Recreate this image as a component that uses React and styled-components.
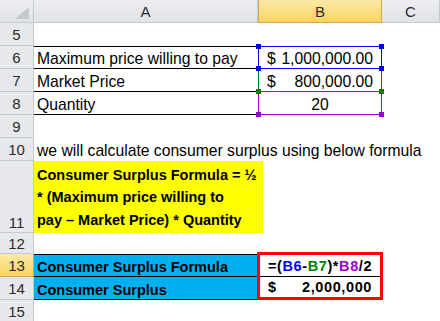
import React from 'react';
import styled, { createGlobalStyle, css } from 'styled-components';

const GlobalStyle = createGlobalStyle`
  html, body { margin: 0; padding: 0; background: #fff; }
  body { font-family: "Liberation Sans", Arial, sans-serif; overflow: hidden; }
`;

const Sheet = styled.div`
  display: grid;
  grid-template-columns: 34px 224px 124px 58px;
  grid-template-rows: 23px repeat(6, 23px) 72px 21px 23px 23px 23px;
  width: 440px;
  height: 321px;
  overflow: hidden;
  background: #fff;
`;

const headerBase = css`
  box-sizing: border-box;
  border-right: 1px solid #c5cad0;
  border-bottom: 1px solid #c5cad0;
  color: #2b2b2b;
  display: flex;
  align-items: center;
  justify-content: center;
  font-size: 15px;
`;

const activeBg = 'linear-gradient(#fde9a7, #f8d360)';
const idleBg = 'linear-gradient(#eceef1, #e0e3e7)';

const Corner = styled.div`
  ${headerBase};
  background: ${idleBg};
  position: relative;
  &::after {
    content: '';
    position: absolute;
    right: 4px;
    bottom: 3px;
    width: 0;
    height: 0;
    border-left: 14px solid transparent;
    border-bottom: 12px solid #c4c7cc;
  }
`;

const ColHeader = styled.div`
  ${headerBase};
  background: ${(p) => (p.$active ? activeBg : idleBg)};
  ${(p) => p.$active && css`border-color: #d9a74a; border-left: 1px solid #d9a74a;`}
`;

const RowHeader = styled.div`
  ${headerBase};
  background: ${(p) => (p.$active ? activeBg : '#e6e8eb')};
  ${(p) => p.$active && css`border-color: #d9a74a;`}
  align-items: ${(p) => (p.$bottom ? 'flex-end' : 'center')};
  padding-bottom: ${(p) => (p.$bottom ? '1px' : '0')};
`;

const lineShadows = (lines = '') => {
  const s = [];
  if (lines.includes('t')) s.push('inset 0 1px 0 #000');
  if (lines.includes('b')) s.push('inset 0 -1px 0 #000');
  return s.length ? s.join(', ') : 'none';
};

const Cell = styled.div`
  box-sizing: border-box;
  min-width: 0;
  display: flex;
  align-items: flex-end;
  justify-content: ${(p) =>
    p.$align === 'center' ? 'center' : p.$align === 'right' ? 'flex-end' : 'flex-start'};
  padding: 0 3px;
  font-size: ${(p) => (p.$bold ? '14.5px' : '15.7px')};
  font-weight: ${(p) => (p.$bold ? 700 : 400)};
  line-height: 20px;
  color: #000;
  white-space: nowrap;
  background: ${(p) => p.$fill || 'transparent'};
  box-shadow: ${(p) => lineShadows(p.$lines)};
`;

const NoteCell = styled.div`
  box-sizing: border-box;
  margin-right: -5px;
  background: #ffff00;
  display: flex;
  flex-direction: column;
  justify-content: flex-end;
  padding: 0 3px 2px;
  font-size: 14.5px;
  font-weight: 700;
  line-height: 22.5px;
  color: #000;
  white-space: nowrap;
`;

const NoteLine = styled.span`
  display: block;
`;

const RefCell = styled.div`
  position: relative;
  box-sizing: border-box;
  display: flex;
  align-items: flex-end;
  justify-content: ${(p) => (p.$center ? 'center' : 'space-between')};
  padding: 0 9px;
  font-size: 15.7px;
  line-height: 20px;
  color: #000;
  white-space: nowrap;
  box-shadow: ${(p) =>
    [
      `inset 1px 0 0 ${p.$color}`,
      `inset -1px 0 0 ${p.$color}`,
      `inset 0 -1px 0 ${p.$color}`,
      p.$top ? `inset 0 1px 0 ${p.$color}` : null,
    ]
      .filter(Boolean)
      .join(', ')};
`;

const Handle = styled.span`
  position: absolute;
  width: 5px;
  height: 5px;
  background: ${(p) => p.$color};
  z-index: ${(p) => p.$z};
  ${(p) => (p.$v === 'top' ? 'top: -2px;' : 'bottom: -2px;')}
  ${(p) => (p.$h === 'left' ? 'left: -2px;' : 'right: -2px;')}
`;

const Handles = ({ color, z, top }) => (
  <>
    {top && <Handle $color={color} $z={z} $v="top" $h="left" />}
    {top && <Handle $color={color} $z={z} $v="top" $h="right" />}
    <Handle $color={color} $z={z} $v="bottom" $h="left" />
    <Handle $color={color} $z={z} $v="bottom" $h="right" />
  </>
);

const ResultBox = styled.div`
  grid-column: 3;
  grid-row: 10 / span 2;
  margin: -2px -1px 0 -1px;
  border: 3px solid #ff0000;
  display: flex;
  flex-direction: column;
  position: relative;
  z-index: 2;
  background: #fff;
`;

const ResultRow = styled.div`
  flex: 1;
  display: flex;
  align-items: flex-end;
  justify-content: ${(p) => (p.$split ? 'space-between' : 'flex-start')};
  padding: 0 8px 0 8px;
  font-size: 14.5px;
  font-weight: 700;
  letter-spacing: 0.6px;
  line-height: 20px;
  white-space: nowrap;
  color: #000;
  border-bottom: ${(p) => (p.$line ? '1px solid #000' : 'none')};
`;

const Ref = styled.span`
  color: ${(p) => p.$color};
`;

const BLUE = '#0000ff';
const GREEN = '#008000';
const PURPLE = '#9900cc';
const CYAN = '#00b0f0';

export default function App() {
  return (
    <>
      <GlobalStyle />
      <Sheet>
        <Corner />
        <ColHeader>A</ColHeader>
        <ColHeader $active>B</ColHeader>
        <ColHeader>C</ColHeader>

        <RowHeader>5</RowHeader>
        <Cell />
        <Cell />
        <Cell />

        <RowHeader>6</RowHeader>
        <Cell $lines="tb">Maximum price willing to pay</Cell>
        <RefCell $color={BLUE} $top>
          <Handles color={BLUE} z={3} top />
          <span>$</span>
          <span>1,000,000.00</span>
        </RefCell>
        <Cell />

        <RowHeader>7</RowHeader>
        <Cell $lines="b">Market Price</Cell>
        <RefCell $color={GREEN}>
          <Handles color={GREEN} z={2} />
          <span>$</span>
          <span>800,000.00</span>
        </RefCell>
        <Cell />

        <RowHeader>8</RowHeader>
        <Cell $lines="b">Quantity</Cell>
        <RefCell $color={PURPLE} $center>
          <Handles color={PURPLE} z={1} />
          <span>20</span>
        </RefCell>
        <Cell />

        <RowHeader>9</RowHeader>
        <Cell />
        <Cell />
        <Cell />

        <RowHeader>10</RowHeader>
        <Cell>we will calculate consumer surplus using below formula</Cell>
        <Cell />
        <Cell />

        <RowHeader $bottom>11</RowHeader>
        <NoteCell>
          <NoteLine>Consumer Surplus Formula = ½</NoteLine>
          <NoteLine>* (Maximum price willing to</NoteLine>
          <NoteLine>pay – Market Price) * Quantity</NoteLine>
        </NoteCell>
        <Cell />
        <Cell />

        <RowHeader>12</RowHeader>
        <Cell />
        <Cell />
        <Cell />

        <RowHeader $active>13</RowHeader>
        <Cell $bold $fill={CYAN} $lines="tb">Consumer Surplus Formula</Cell>
        <ResultBox>
          <ResultRow $line>
            <span>
              =(<Ref $color={BLUE}>B6</Ref>-<Ref $color={GREEN}>B7</Ref>)*<Ref $color={PURPLE}>B8</Ref>/2
            </span>
          </ResultRow>
          <ResultRow $split>
            <span>$</span>
            <span>2,000,000</span>
          </ResultRow>
        </ResultBox>
        <Cell />

        <RowHeader>14</RowHeader>
        <Cell $bold $fill={CYAN} $lines="b">Consumer Surplus</Cell>
        <Cell />

        <RowHeader>15</RowHeader>
        <Cell />
        <Cell />
        <Cell />
      </Sheet>
    </>
  );
}
